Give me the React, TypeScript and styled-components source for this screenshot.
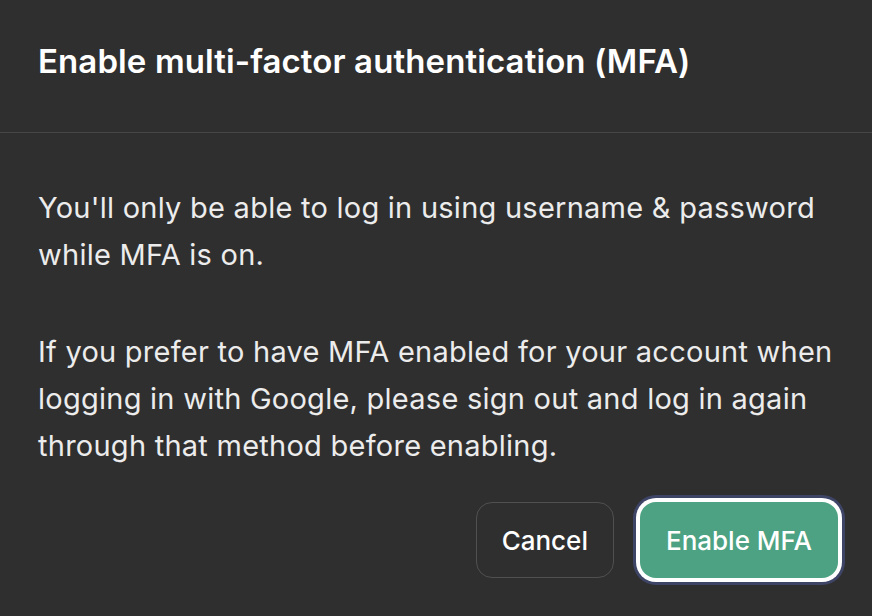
import React from "react";
import styled, { createGlobalStyle } from "styled-components";

const GlobalStyle = createGlobalStyle`
  html, body {
    margin: 0;
    padding: 0;
    background: #2f2f2f;
  }
  body {
    font-family: Inter, "Liberation Sans", sans-serif;
    color: #ececec;
  }
`;

export default function App() {
  return (
    <>
      <GlobalStyle />
      <Dialog>
        <Header>
          <Title>Enable multi-factor authentication (MFA)</Title>
        </Header>
        <Body>
          <Paragraph>
            You'll only be able to log in using username &amp; password while
            MFA is on.
          </Paragraph>
          <Paragraph>
            If you prefer to have MFA enabled for your account when logging in
            with Google, please sign out and log in again through that method
            before enabling.
          </Paragraph>
          <Actions>
            <Button>Cancel</Button>
            <Button primary>Enable MFA</Button>
          </Actions>
        </Body>
      </Dialog>
    </>
  );
}

const Dialog = styled.div`
  width: 872px;
  height: 616px;
  background: #2f2f2f;
  overflow: hidden;
`;

const Header = styled.div`
  height: 133px;
  padding: 0 38px 10px;
  display: flex;
  align-items: center;
  border-bottom: 1px solid #464646;
  box-sizing: border-box;
`;

const Title = styled.h2`
  margin: 0;
  font-size: 33px;
  font-weight: 600;
  color: #ffffff;
  letter-spacing: 0.1px;
`;

const Body = styled.div`
  padding: 51px 34px 0 38px;
`;

const Paragraph = styled.p`
  margin: 0 0 50px;
  font-size: 29px;
  line-height: 47px;
  letter-spacing: 0.25px;
  color: #ececec;
  max-width: 800px;

  &:last-of-type {
    margin-bottom: 33px;
  }
`;

const Actions = styled.div`
  display: flex;
  justify-content: flex-end;
  gap: 26px;
`;

const Button = styled.button<{ primary?: boolean }>`
  height: 76px;
  padding: 0 ${(p) => (p.primary ? "26px" : "25px")};
  border-radius: 16px;
  font-family: Inter, "Liberation Sans", sans-serif;
  font-size: 26px;
  font-weight: 500;
  color: #ffffff;
  cursor: pointer;
  background: ${(p) => (p.primary ? "#4ca282" : "transparent")};
  border: ${(p) => (p.primary ? "none" : "1.5px solid #505050")};
  box-shadow: ${(p) =>
    p.primary ? "0 0 0 4px #ffffff, 0 0 0 7px #3d4466" : "none"};
`;
